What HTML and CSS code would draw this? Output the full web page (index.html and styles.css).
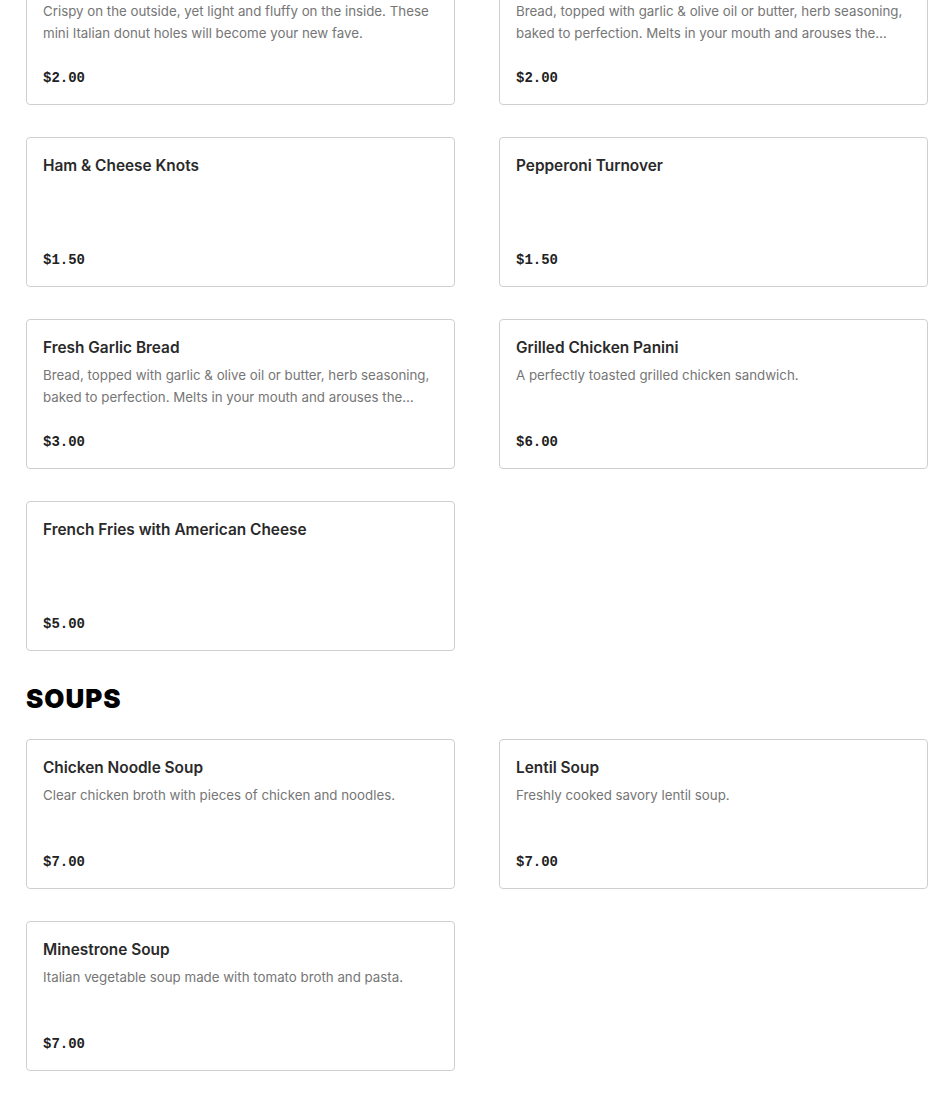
FILE: index.html
```html
<!DOCTYPE html>
<html lang="en">
<head>
  <meta charset="UTF-8" />
  <title>Menu</title>
  <link rel="stylesheet" href="styles.css">
</head>
<body>

  <div class="menu">

    <!-- Appetizers (scrolled part) -->
    <section class="section first">
      <div class="grid">
        <div class="card">
          <div class="name">Zeppole</div>
          <div class="desc">Crispy on the outside, yet light and fluffy on the inside. These mini Italian donut holes will become your new fave.</div>
          <div class="price">$2.00</div>
        </div>
        <div class="card">
          <div class="name">Garlic Knots</div>
          <div class="desc">Bread, topped with garlic &amp; olive oil or butter, herb seasoning, baked to perfection. Melts in your mouth and arouses the senses.</div>
          <div class="price">$2.00</div>
        </div>
        <div class="card">
          <div class="name">Ham &amp; Cheese Knots</div>
          <div class="desc"></div>
          <div class="price">$1.50</div>
        </div>
        <div class="card">
          <div class="name">Pepperoni Turnover</div>
          <div class="desc"></div>
          <div class="price">$1.50</div>
        </div>
        <div class="card">
          <div class="name">Fresh Garlic Bread</div>
          <div class="desc">Bread, topped with garlic &amp; olive oil or butter, herb seasoning, baked to perfection. Melts in your mouth and arouses the senses.</div>
          <div class="price">$3.00</div>
        </div>
        <div class="card">
          <div class="name">Grilled Chicken Panini</div>
          <div class="desc">A perfectly toasted grilled chicken sandwich.</div>
          <div class="price">$6.00</div>
        </div>
        <div class="card">
          <div class="name">French Fries with American Cheese</div>
          <div class="desc"></div>
          <div class="price">$5.00</div>
        </div>
      </div>
    </section>

    <section class="section">
      <h2>SOUPS</h2>
      <div class="grid">
        <div class="card">
          <div class="name">Chicken Noodle Soup</div>
          <div class="desc">Clear chicken broth with pieces of chicken and noodles.</div>
          <div class="price">$7.00</div>
        </div>
        <div class="card">
          <div class="name">Lentil Soup</div>
          <div class="desc">Freshly cooked savory lentil soup.</div>
          <div class="price">$7.00</div>
        </div>
        <div class="card">
          <div class="name">Minestrone Soup</div>
          <div class="desc">Italian vegetable soup made with tomato broth and pasta.</div>
          <div class="price">$7.00</div>
        </div>
      </div>
    </section>

  </div>

</body>
</html>
```

FILE: styles.css
```css
* { margin: 0; padding: 0; box-sizing: border-box; }

body {
  background: white;
  color: #2a2a2a;
  font-family: Inter, 'Noto Sans', sans-serif;
  overflow: hidden;
}

.menu {
  padding: 0 22px 40px 26px;
}

/* page is scrolled down a bit */
.section.first {
  margin-top: -45px;
}

.grid {
  display: grid;
  grid-template-columns: 1fr 1fr;
  column-gap: 44px;
  row-gap: 32px;
}

h2 {
  font-family: Inter, sans-serif;
  font-size: 26px;
  font-weight: 900;
  line-height: 36px;
  color: black;
  letter-spacing: 1px;
  margin: 30px 0 22px;
}

.card {
  height: 150px;
  border: 1px solid #cfcfcf;
  border-radius: 4px;
  padding: 16px;
  display: flex;
  flex-direction: column;
}

.name {
  font-size: 15.4px;
  font-weight: 600;
  line-height: 24px;
  color: #2a2a2a;
}

.desc {
  margin-top: 4px;
  font-size: 13.3px;
  line-height: 22px;
  color: #767676;
  display: -webkit-box;
  -webkit-line-clamp: 2;
  -webkit-box-orient: vertical;
  overflow: hidden;
}

.price {
  margin-top: auto;
  font-family: 'Liberation Mono', monospace;
  font-size: 14px;
  font-weight: bold;
  line-height: 20px;
  color: #222;
}
```
